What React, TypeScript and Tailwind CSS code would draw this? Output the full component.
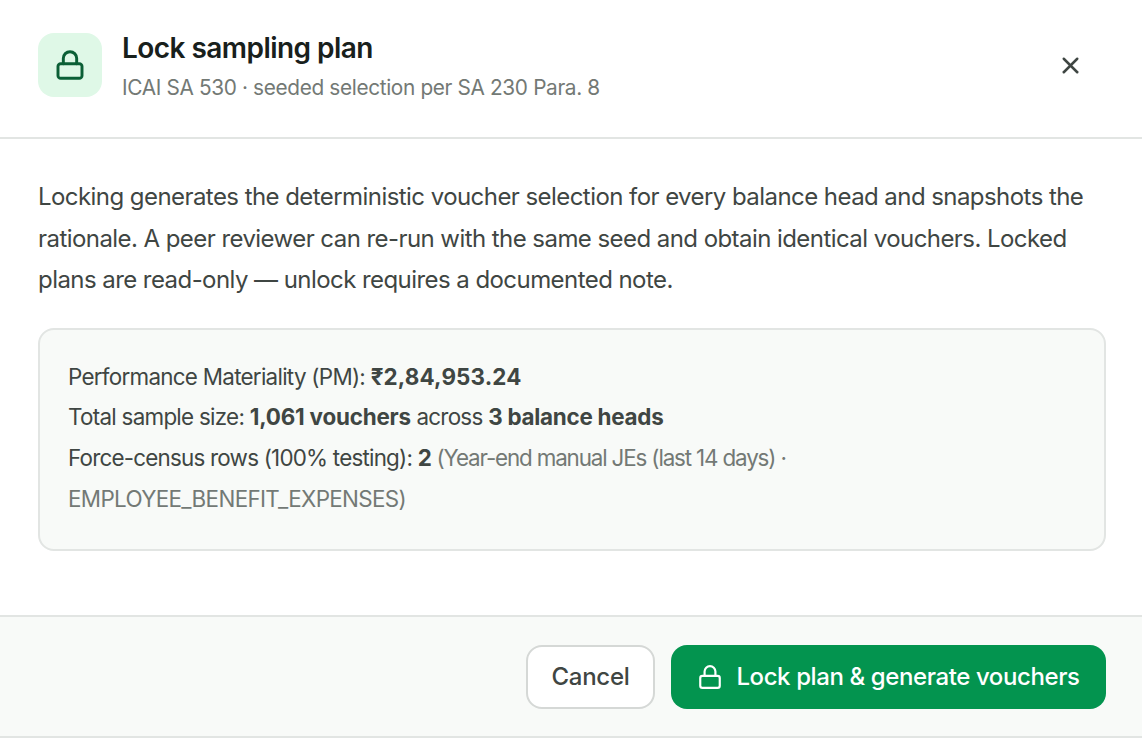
import { Lock, X } from "lucide-react";

function App() {
  return (
    <div className="w-[1142px] h-[738px] bg-white flex flex-col overflow-hidden font-['Inter',sans-serif] text-[#3f4643]">
      <header className="h-[139px] shrink-0 flex items-start gap-5 pl-[38px] pr-[58px] pt-[33px] border-b-2 border-[#e2e5e3]">
        <div className="w-16 h-16 rounded-2xl bg-[#dff8e7] flex items-center justify-center shrink-0">
          <Lock size={32} strokeWidth={2.2} className="text-[#0b5f36]" />
        </div>
        <div className="flex-1 min-w-0">
          <h2 className="text-[28px] leading-[30px] font-semibold tracking-[-0.55px] text-[#18201c]">Lock sampling plan</h2>
          <p className="mt-[9px] text-[20.8px] leading-[32px] tracking-[-0.35px] text-[#737975]">
            ICAI SA 530 · seeded selection per SA 230 Para. 8
          </p>
        </div>
        <button className="mt-[18px] w-7 h-7 flex items-center justify-center text-[#3f4643]">
          <X size={27} strokeWidth={2.2} />
        </button>
      </header>

      <main className="flex-1 min-h-0 pl-[38px] pr-9 pt-[37px]">
        <p className="text-[24px] leading-[41.5px] tracking-[-0.56px]">
          Locking generates the deterministic voucher selection for every balance head and snapshots the rationale. A peer reviewer can re-run with the same seed and obtain identical vouchers. Locked plans are read-only — unlock requires a documented note.
        </p>
        <div className="mt-[27px] h-[223px] rounded-2xl border-2 border-[#e2e5e3] bg-[#f8faf8] px-7 pt-[27px] text-[22.4px] leading-[40.8px] tracking-[-0.72px]">
          <div>Performance Materiality (PM): <strong className="font-bold tracking-[0.15px]">₹2,84,953.24</strong></div>
          <div>Total sample size: <strong className="font-bold tracking-[-0.2px]">1,061 vouchers</strong> across <strong className="font-bold tracking-[-0.25px]">3 balance heads</strong></div>
          <div>
            <span className="tracking-[-0.78px]">Force-census rows (100% testing): </span>
            <strong className="font-bold">2</strong>{" "}
            <span className="text-[#737975] tracking-[-1.15px]">(Year-end manual JEs (last 14 days) ·</span>
          </div>
          <div className="text-[#737975] tracking-[-0.65px]">EMPLOYEE_BENEFIT_EXPENSES)</div>
        </div>
      </main>

      <footer className="h-[123px] shrink-0 flex items-start justify-end gap-4 pr-9 pt-7 bg-[#f8faf8] border-y-2 border-[#e2e5e3]">
        <button className="h-16 w-[129px] rounded-2xl border-2 border-[#d5d8d6] bg-white text-[24px] font-medium tracking-[-0.3px] text-[#3f4643]">Cancel</button>
        <button className="h-16 w-[435px] rounded-2xl bg-[#03944f] text-white text-[24px] font-medium tracking-[-0.4px] flex items-center justify-center gap-[13px]">
          <Lock size={26} strokeWidth={2} />
          Lock plan &amp; generate vouchers
        </button>
      </footer>
    </div>
  );
}

export default App;
